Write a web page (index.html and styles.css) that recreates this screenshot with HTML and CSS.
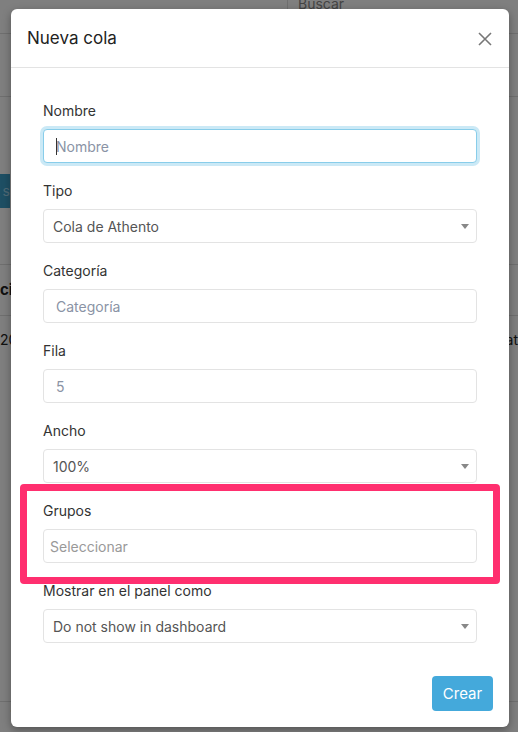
FILE: index.html
```html
<!DOCTYPE html>
<html lang="es">
<head>
  <meta charset="UTF-8">
  <meta name="viewport" content="width=device-width, initial-scale=1.0">
  <title>Nueva cola</title>
  <link rel="stylesheet" href="styles.css">
</head>
<body>
  <!-- Page behind the modal -->
  <div class="page">
    <div class="page-top">
      <div class="search">Buscar</div>
    </div>
    <div class="page-row row-toolbar"></div>
    <div class="page-row row-actions">
      <span class="btn-teal">s</span>
    </div>
    <div class="page-row row-head"><b>ci</b></div>
    <div class="page-row row-data">
      <span>20</span>
      <span>at</span>
    </div>
    <div class="page-row row-last"></div>
    <div class="page-foot">· 2</div>
  </div>
  <div class="backdrop"></div>

  <!-- Modal -->
  <div class="modal">
    <div class="modal-header">
      <h4 class="modal-title">Nueva cola</h4>
      <button class="close" type="button" aria-label="Cerrar">
        <svg width="16" height="16" viewBox="0 0 16 16">
          <path d="M2 2 L14 14 M14 2 L2 14" stroke="#777" stroke-width="1.6" fill="none"/>
        </svg>
      </button>
    </div>

    <form class="modal-body">
      <div class="form-group">
        <label>Nombre</label>
        <div class="input-wrap">
          <input class="form-control focused" type="text" placeholder="Nombre">
          <span class="caret"></span>
        </div>
      </div>

      <div class="form-group">
        <label>Tipo</label>
        <div class="select-wrap">
          <select class="form-control">
            <option>Cola de Athento</option>
          </select>
        </div>
      </div>

      <div class="form-group">
        <label>Categoría</label>
        <input class="form-control" type="text" placeholder="Categoría">
      </div>

      <div class="form-group">
        <label>Fila</label>
        <input class="form-control" type="text" placeholder="5">
      </div>

      <div class="form-group">
        <label>Ancho</label>
        <div class="select-wrap">
          <select class="form-control">
            <option>100%</option>
          </select>
        </div>
      </div>

      <div class="form-group highlight">
        <label>Grupos</label>
        <input class="form-control multi" type="text" placeholder="Seleccionar">
      </div>

      <div class="form-group">
        <label>Mostrar en el panel como</label>
        <div class="select-wrap">
          <select class="form-control">
            <option>Do not show in dashboard</option>
          </select>
        </div>
      </div>
    </form>

    <div class="modal-footer">
      <button class="btn-primary" type="button">Crear</button>
    </div>
  </div>
</body>
</html>
```

FILE: styles.css
```css
/* Base */
html, body {
  margin: 0;
  height: 100%;
}

body {
  position: relative;
  overflow: hidden;
  background: #fff;
  font-family: Inter, "Noto Sans", sans-serif;
  color: #333;
}

/* Page behind the modal */
.page {
  display: flex;
  flex-direction: column;
  height: 100%;
  font-size: 14px;
  color: #222;
}

.page-top {
  height: 33px;
  border-bottom: 1px solid #dedede;
  display: flex;
  justify-content: flex-end;
}

.search {
  width: 220px;
  border-left: 1px solid #dedede;
  padding-left: 10px;
  margin-top: -4px;
  line-height: 16px;
  color: #888;
}

.page-row {
  border-bottom: 1px solid #dedede;
  display: flex;
  justify-content: space-between;
  align-items: center;
}

.row-toolbar {
  height: 63px;
}

.row-actions {
  height: 167px;
  align-items: flex-start;
}

.btn-teal {
  margin-top: 77px;
  background: #3c9ec9;
  color: #9fd3ea;
  width: 10px;
  height: 34px;
  line-height: 34px;
  text-align: right;
}

.row-head {
  height: 51px;
  font-size: 15px;
}

.row-data {
  height: 372px;
  align-items: flex-start;
  padding-top: 15px;
}

.row-last {
  flex: 1;
  border-bottom: none;
}

.page-foot {
  height: 30px;
  padding-left: 10px;
}

.backdrop {
  position: absolute;
  inset: 0;
  background: rgba(0, 0, 0, 0.5);
}

/* Modal */
.modal {
  position: absolute;
  left: 11px;
  top: 9px;
  width: 498px;
  height: 718px;
  background: #fff;
  border-radius: 6px;
  box-shadow: 0 3px 9px rgba(0, 0, 0, 0.35);
  display: flex;
  flex-direction: column;
  box-sizing: border-box;
}

.modal-header {
  height: 58px;
  padding: 0 14px 0 16px;
  border-bottom: 1px solid #e3e3e3;
  display: flex;
  align-items: center;
  justify-content: space-between;
}

.modal-title {
  margin: 0;
  font-size: 17px;
  font-weight: 400;
  color: #222;
}

.close {
  border: 0;
  background: none;
  padding: 0;
  width: 20px;
  height: 20px;
  display: flex;
  align-items: center;
  justify-content: center;
  margin-top: 1px;
}

.modal-body {
  padding: 33px 32px 0;
  display: flex;
  flex-direction: column;
  gap: 18px;
}

.form-group {
  display: flex;
  flex-direction: column;
}

.form-group label {
  font-size: 14px;
  line-height: 20px;
  margin-bottom: 8px;
  color: #333;
}

.form-control {
  box-sizing: border-box;
  width: 100%;
  height: 34px;
  border: 1px solid #e3e3e3;
  border-radius: 4px;
  padding: 0 12px;
  font-family: Inter, "Noto Sans", sans-serif;
  font-size: 14px;
  color: #555;
  background: #fff;
  outline: none;
}

.form-control::placeholder {
  color: #8a93a5;
}

.form-control.focused {
  border-color: #88cdea;
  box-shadow: 0 0 0 3px #cbe9f6;
}

/* Text cursor drawn over the focused input */
.input-wrap {
  position: relative;
}

.caret {
  position: absolute;
  left: 13px;
  top: 9px;
  width: 1px;
  height: 17px;
  background: #333;
}

.form-control.multi {
  padding-left: 6px;
}

.form-control.multi::placeholder {
  color: #999;
}

/* Select with custom arrow */
.select-wrap {
  position: relative;
}

.select-wrap select {
  appearance: none;
  -webkit-appearance: none;
  padding-left: 9px;
}

.select-wrap::after {
  content: "";
  position: absolute;
  right: 8px;
  top: 15px;
  border-left: 4px solid transparent;
  border-right: 4px solid transparent;
  border-top: 5px solid #888;
}

/* Highlight annotation around "Grupos" */
.highlight {
  position: relative;
}

.highlight::before {
  content: "";
  position: absolute;
  top: -17px;
  left: -23px;
  right: -23px;
  bottom: -21px;
  border: 7px solid #ff2f6f;
  border-radius: 4px;
}

/* Footer */
.modal-footer {
  margin-top: auto;
  padding: 0 16px 16px;
  display: flex;
  justify-content: flex-end;
}

.btn-primary {
  width: 61px;
  height: 35px;
  border: 0;
  border-radius: 4px;
  background: #44a9db;
  color: #fff;
  font-family: Inter, "Noto Sans", sans-serif;
  font-size: 15px;
}
```
